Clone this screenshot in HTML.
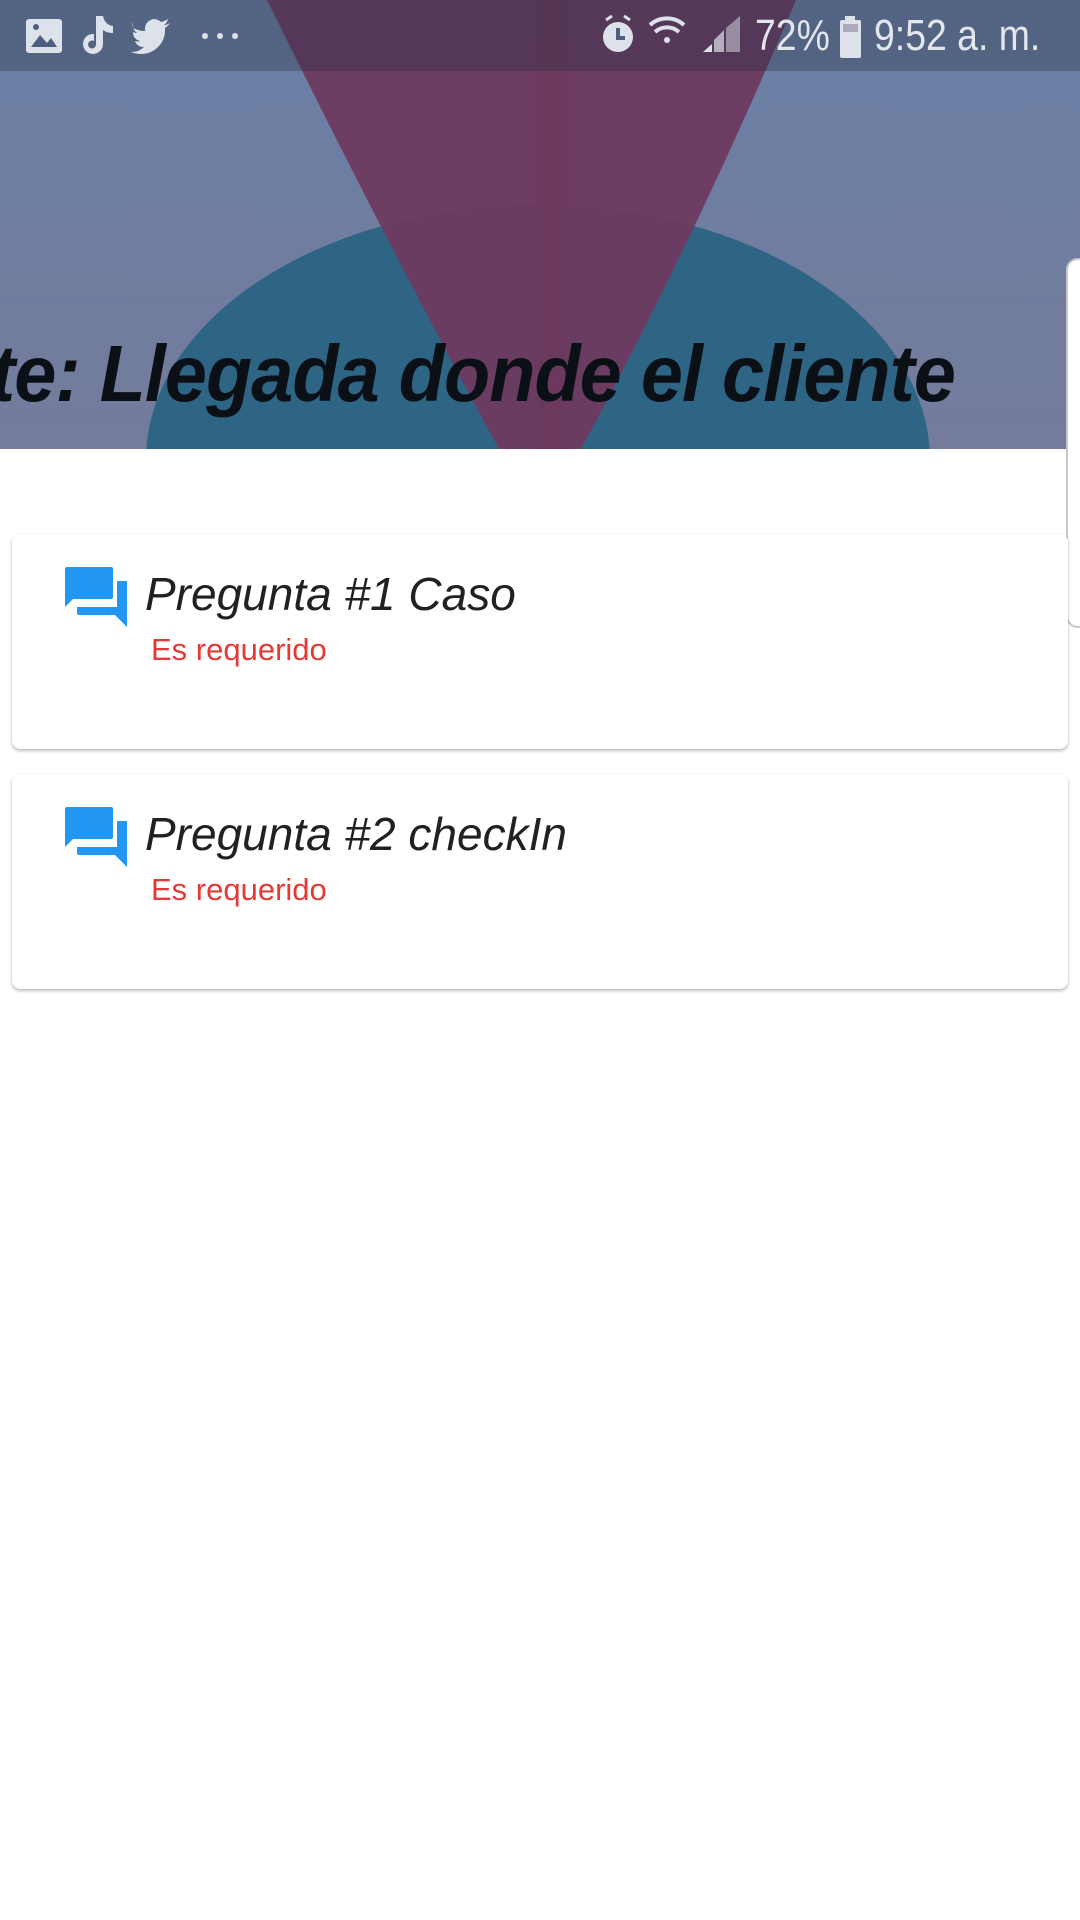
<!DOCTYPE html>
<html><head><meta charset="utf-8"><style>
*{margin:0;padding:0;box-sizing:border-box}
body{width:1080px;height:1920px;background:#fff;position:relative;overflow:hidden;font-family:"Liberation Sans",sans-serif}
.banner{position:absolute;left:0;top:0;width:1080px;height:449px;overflow:hidden;background:linear-gradient(#6a80a6,#747b9b)}
.sb{position:absolute;left:0;top:0;width:1080px;height:71px;background:rgba(40,50,70,0.35)}
.sbt{position:absolute;top:11px;color:#e4e6ee;font-size:44px;transform:scaleX(0.85);transform-origin:left}
.title{position:absolute;left:-10px;top:328px;font-size:80px;font-weight:bold;font-style:italic;color:#0b1016;white-space:nowrap;letter-spacing:-1px;transform:scaleX(0.945);transform-origin:left}
.card{position:absolute;left:12px;width:1056px;height:215px;background:#fff;border-radius:8px;box-shadow:0 2px 3px rgba(0,0,0,0.25),0 0 1px rgba(0,0,0,0.15)}
.q{position:absolute;left:133px;top:33px;font-size:46px;font-style:italic;color:#212121;white-space:nowrap}
.r{position:absolute;left:139px;top:98px;font-size:31px;color:#e53935;white-space:nowrap}
.ic{position:absolute;left:53px;top:33px}
</style></head><body>
<div class="banner">
<svg width="1080" height="449" style="position:absolute;left:0;top:0">
<ellipse cx="538" cy="460" rx="392" ry="255" fill="#2e6585"/>
<path d="M267 0 L796 0 Q690 250 575 460 L505 460 Q390 250 267 0Z" fill="#6e3a60" opacity="0.95"/>
<rect x="537" y="0" width="30" height="449" fill="#6e2e50" opacity="0.25"/>
</svg>
<div class="sb"></div>
<svg width="240" height="71" style="position:absolute;left:0;top:0" fill="#dde1ea">
<rect x="26" y="19" width="36" height="34" rx="3"/><path d="M31 47 L40 35 L47 43 L51 38 L57 47Z" fill="#4d5f7e"/><circle cx="36" cy="27" r="3" fill="#4d5f7e"/>
<path d="M96 16 h7 q2 9 10 10 v7 q-6 0 -10-3 v14 a10 10 0 1 1 -9-10 v7 a4 4 0 1 0 2 4Z"/>
<path d="M133 28 q6 3 12 3 q-1-9 8-12 q5 0 8 3 q4-1 7-3 q-1 4-4 6 q3 0 6-2 q-2 3-5 5 q1 16-14 24 q-10 4-20 0 q8 0 13-5 q-7 0-9-6 q3 1 5 0 q-7-2-7-9 q2 1 4 1 q-6-5-4-11Z"/>
<circle cx="205" cy="36" r="3"/><circle cx="220" cy="36" r="3"/><circle cx="235" cy="36" r="3"/>
</svg>
<svg width="150" height="71" style="position:absolute;left:600px;top:0" fill="#dde1ea">
<path d="M6 20 l6-4 M30 20 l-6-4" stroke="#dde1ea" stroke-width="3"/>
<circle cx="18" cy="37" r="15"/><path d="M18 28 v10 h7" stroke="#4d5f7e" stroke-width="4" fill="none"/>
<path d="M50 25 a25 25 0 0 1 34 0" stroke="#dde1ea" stroke-width="4" fill="none"/><path d="M55 32 a18 18 0 0 1 24 0" stroke="#dde1ea" stroke-width="4" fill="none"/><circle cx="67" cy="40" r="3"/>
<path d="M103 52 L112 44 V52Z"/><path d="M114 52 V40 L124 30 V52Z" opacity="0.7"/><path d="M126 52 V28 L140 16 V52Z" opacity="0.5"/>
</svg>
<div class="sbt" style="left:755px">72%</div>
<svg width="26" height="50" style="position:absolute;left:838px;top:16px"><rect x="7" y="0" width="10" height="5" fill="#dde1ea"/><rect x="2" y="4" width="21" height="38" rx="2" fill="#dde1ea"/><rect x="5" y="8" width="15" height="8" fill="#aab"/></svg>
<div class="sbt" style="left:874px">9:52 a. m.</div>
<div class="title">te: Llegada donde el cliente</div>
</div>
<div style="position:absolute;left:1066px;top:258px;width:30px;height:370px;border:2px solid #c8c8c8;border-radius:12px;background:#fff"></div>
<div class="card" style="top:534px">
<svg class="ic" width="62" height="60" viewBox="0 0 62 60"><path d="M0 2 a2 2 0 0 1 2-2 h44 a2 2 0 0 1 2 2 v28 a2 2 0 0 1 -2 2 H12 V40 H52 V14 H62 V60 L50 48 H14 a2 2 0 0 1 -2-2 V32 H8 L0 40Z" fill="#2196f3"/></svg>
<div class="q">Pregunta #1 Caso</div>
<div class="r">Es requerido</div>
</div>
<div class="card" style="top:774px">
<svg class="ic" width="62" height="60" viewBox="0 0 62 60"><path d="M0 2 a2 2 0 0 1 2-2 h44 a2 2 0 0 1 2 2 v28 a2 2 0 0 1 -2 2 H12 V40 H52 V14 H62 V60 L50 48 H14 a2 2 0 0 1 -2-2 V32 H8 L0 40Z" fill="#2196f3"/></svg>
<div class="q">Pregunta #2 checkIn</div>
<div class="r">Es requerido</div>
</div>
</body></html>
